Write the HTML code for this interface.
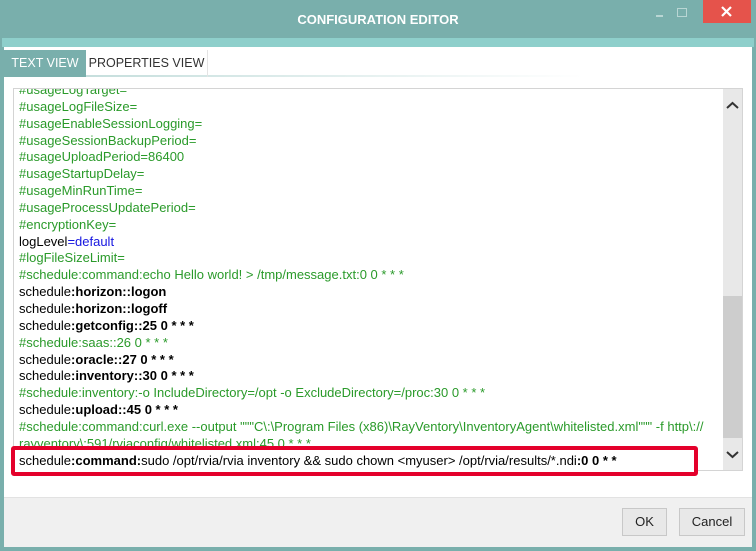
<!DOCTYPE html>
<html><head><meta charset="utf-8"><style>
*{margin:0;padding:0;box-sizing:border-box}
body{width:756px;height:551px;background:#79afac;position:relative;overflow:hidden;font-family:"Liberation Sans","DejaVu Sans",sans-serif}
.title{position:absolute;left:0;top:0;width:756px;height:38px;color:#fff;font-weight:bold;font-size:13px;text-align:center;line-height:40px}
.close{position:absolute;left:703px;top:0;width:48px;height:23px;background:#e5534b}
.min{position:absolute;left:656px;top:15px;width:7px;height:2px;background:#b9d6d4}
.max{position:absolute;left:677px;top:8px;width:10px;height:9px;border:1px solid #b9d6d4}
.band{position:absolute;left:2px;top:38px;width:752px;height:9px;background:#8ecfcb}
.main{position:absolute;left:4px;top:47px;width:748px;height:450px;background:#fff}
.tabline{position:absolute;left:4px;top:75px;width:580px;height:2px;background:linear-gradient(to right,#bcd9d7,#fff)}
.tab1{position:absolute;left:4px;top:50px;width:82px;height:27px;background:#79afac;color:#fff;font-size:12.5px;line-height:27px;text-align:center}
.tab2{position:absolute;left:86px;top:50px;width:122px;height:27px;color:#333;font-size:12.5px;line-height:27px;text-align:center;border-right:1px solid #e4e4e4}
.editor{position:absolute;left:13px;top:88px;width:730px;height:383px;border:1px solid #d4d4d4;overflow:hidden}
.sb{position:absolute;left:709px;top:0;width:19px;height:381px;background:#e8e8e8}
.thumb{position:absolute;left:0;top:207px;width:19px;height:142px;background:#cdcdcd}
.arr{position:absolute;left:3px}
.lines{position:absolute;left:5px;top:-7px;font-size:13px;line-height:16.85px;color:#000;white-space:nowrap}
.g{color:#2a9a2a}.b{font-weight:bold}.bl{color:#1515e0}
.hl{position:absolute;left:11px;top:446px;width:687px;height:30px;border:4px solid #e4002b;border-radius:3px;background:#fff;font-size:13px;line-height:22px;padding-left:4px;white-space:nowrap}
.foot{position:absolute;left:4px;top:497px;width:748px;height:50px;background:#f0f0f0;border-top:1px solid #e2e2e2}
.btn{position:absolute;top:508px;height:28px;background:#e8e8e8;border:1px solid #c8c8c8;font-size:13px;line-height:26px;text-align:center;color:#222}
</style></head><body>
<div class="title">CONFIGURATION EDITOR</div>
<div class="min"></div><div class="max"></div>
<div class="close"><svg width="48" height="23"><path d="M19 7L28 16M28 7L19 16" stroke="#fff" stroke-width="2.2"/></svg></div>
<div class="band"></div>
<div class="main"></div>
<div class="tabline"></div>
<div class="tab1">TEXT VIEW</div>
<div class="tab2">PROPERTIES VIEW</div>
<div class="editor">
<div class="lines">
<div class="g">#usageLogTarget=</div>
<div class="g">#usageLogFileSize=</div>
<div class="g">#usageEnableSessionLogging=</div>
<div class="g">#usageSessionBackupPeriod=</div>
<div class="g">#usageUploadPeriod=86400</div>
<div class="g">#usageStartupDelay=</div>
<div class="g">#usageMinRunTime=</div>
<div class="g">#usageProcessUpdatePeriod=</div>
<div class="g">#encryptionKey=</div>
<div>logLevel<span class="bl">=default</span></div>
<div class="g">#logFileSizeLimit=</div>
<div class="g">#schedule:command:echo Hello world! &gt; /tmp/message.txt:0 0 * * *</div>
<div>schedule<span class="b">:horizon::logon</span></div>
<div>schedule<span class="b">:horizon::logoff</span></div>
<div>schedule<span class="b">:getconfig::25 0 * * *</span></div>
<div class="g">#schedule:saas::26 0 * * *</div>
<div>schedule<span class="b">:oracle::27 0 * * *</span></div>
<div>schedule<span class="b">:inventory::30 0 * * *</span></div>
<div class="g">#schedule:inventory:-o IncludeDirectory=/opt -o ExcludeDirectory=/proc:30 0 * * *</div>
<div>schedule<span class="b">:upload::45 0 * * *</span></div>
<div class="g">#schedule:command:curl.exe --output """C\:\Program Files (x86)\RayVentory\InventoryAgent\whitelisted.xml""" -f http\://</div>
<div class="g">rayventory\:591/rviaconfig/whitelisted.xml:45 0 * * *</div>
</div>
<div class="sb"><div class="thumb"></div>
<svg class="arr" style="top:12px" width="13" height="9"><path d="M1 7L6.5 2L12 7" stroke="#333" stroke-width="2" fill="none"/></svg>
<svg class="arr" style="top:361px" width="13" height="9"><path d="M1 2L6.5 7L12 2" stroke="#333" stroke-width="2" fill="none"/></svg>
</div>
</div>
<div class="hl">schedule<span class="b">:command:</span>sudo /opt/rvia/rvia inventory &amp;&amp; sudo chown &lt;myuser&gt; /opt/rvia/results/*.ndi<span class="b">:0 0 * *</span></div>
<div class="foot"></div>
<div class="btn" style="left:622px;width:45px">OK</div>
<div class="btn" style="left:679px;width:66px">Cancel</div>
</body></html>
